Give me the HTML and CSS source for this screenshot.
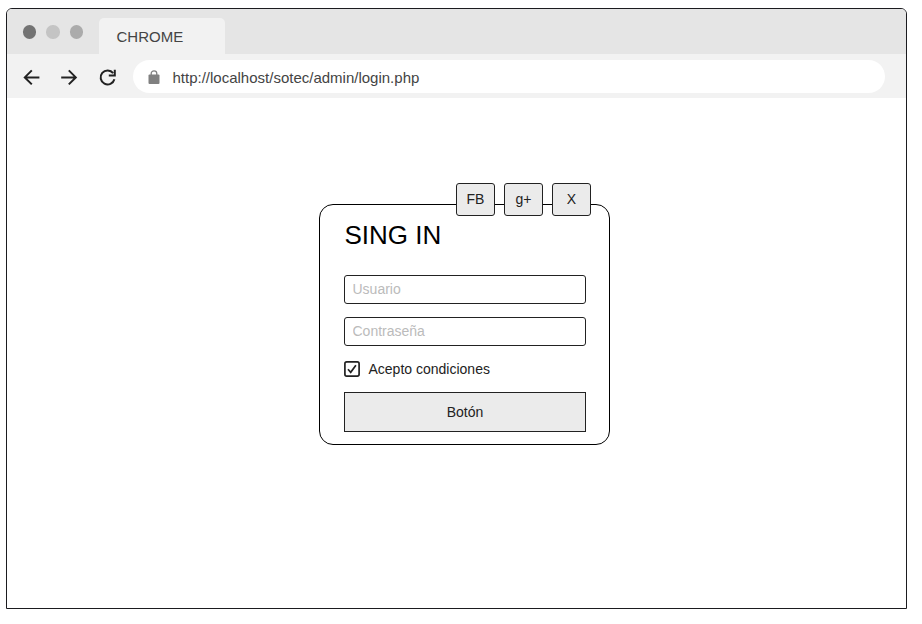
FILE: index.html
```html
<!DOCTYPE html>
<html lang="es">
<head>
<meta charset="utf-8">
<title>Login</title>
<link rel="stylesheet" href="styles.css">
</head>
<body>
<div class="window">
  <header class="tabbar">
    <div class="dots"><span class="dot dark"></span><span class="dot light"></span><span class="dot mid"></span></div>
    <div class="tab">CHROME</div>
  </header>
  <div class="toolbar">
    <svg class="nav" viewBox="0 0 18 18"><path d="M16.4 8.4H2M8.8 1.4L1.8 8.4l7 7"/></svg>
    <svg class="nav" viewBox="0 0 18 18"><path d="M1.2 8.4H15.6M8.8 1.4L15.8 8.4l-7 7"/></svg>
    <svg class="nav reload" viewBox="0 0 18 18"><path d="M15.2 4.2A7 7 0 1 0 16.4 10.2"/><path d="M16.8 0.8v5.6H10.8"/></svg>
    <div class="address">
      <svg class="lock" viewBox="0 0 12 15"><path class="shackle" d="M3.2 6V3.6a2.8 2.8 0 0 1 5.6 0V6"/><rect x="0.5" y="4.6" width="11" height="9.4" rx="1"/></svg>
      <span>http://localhost/sotec/admin/login.php</span>
    </div>
  </div>
  <main class="page">
    <form class="card">
      <div class="social">
        <button type="button">FB</button>
        <button type="button">g+</button>
        <button type="button">X</button>
      </div>
      <h1>SING IN</h1>
      <input class="field" type="text" placeholder="Usuario">
      <input class="field" type="text" placeholder="Contraseña">
      <label class="terms">
        <svg class="check" viewBox="0 0 16 16"><rect x="0.9" y="0.9" width="14.2" height="14.2" rx="1.8"/><path d="M4 8.3l2.7 3L11.9 4.2"/></svg>
        <span>Acepto condiciones</span>
      </label>
      <button class="submit" type="button">Botón</button>
    </form>
  </main>
</div>
</body>
</html>
```
FILE: styles.css
```css
* { box-sizing: border-box; }
body {
  margin: 0;
  padding: 8px 0 0 6px;
  background: #fff;
  color: #222;
  font-family: "Liberation Sans", Arial, sans-serif;
  font-size: 14px;
}
.window {
  width: 901px;
  height: 601px;
  border: 1px solid #1b1b1f;
  border-radius: 6px 6px 0 0;
  overflow: hidden;
}
.tabbar {
  display: flex;
  height: 45px;
  padding: 9px 0 0 15.5px;
  background: #e5e5e5;
}
.dots {
  display: flex;
  gap: 10px;
  width: 76.5px;
  padding-top: 7px;
}
.dot { width: 13.5px; height: 13.5px; border-radius: 50%; }
.dark { background: #737373; }
.light { background: #c4c4c4; }
.mid { background: #ababab; }
.tab {
  width: 126px;
  height: 36px;
  padding-left: 17.5px;
  border-radius: 5px 5px 0 0;
  background: #f2f2f2;
  color: #444;
  font-size: 15px;
  line-height: 37px;
}
.toolbar {
  display: flex;
  align-items: center;
  height: 44px;
  padding: 0 21.5px 0 16px;
  background: #f2f2f2;
}
.nav {
  width: 18px;
  height: 18px;
  margin: 3px 19px 0 0;
  fill: none;
  stroke: #222;
  stroke-width: 2;
}
.reload { margin: 4px 16.5px 0 1px; }
.address {
  display: flex;
  align-items: center;
  flex: 1;
  height: 33px;
  margin-top: 1.5px;
  padding: 1.5px 0 0 15px;
  border-radius: 17px;
  background: #fff;
  color: #444;
  font-size: 15px;
}
.lock { width: 12px; height: 15px; margin-right: 13px; fill: #808080; }
.shackle { fill: none; stroke: #808080; stroke-width: 1.3; }
.page { padding: 106px 0 0 312px; }
.card {
  position: relative;
  display: flex;
  flex-direction: column;
  width: 291px;
  height: 241px;
  padding: 13px 23px 0 24px;
  border: 1px solid #000;
  border-radius: 14px;
}
.social {
  position: absolute;
  top: -22px;
  right: 18px;
  display: flex;
  gap: 9px;
}
button {
  padding: 0;
  border: 1px solid #222;
  background: #ebebeb;
  color: #222;
  font: inherit;
}
.social button { width: 39px; height: 33px; padding-bottom: 1px; border-radius: 3px; }
h1 {
  margin: 0 0 23px 0.5px;
  color: #000;
  font-size: 26px;
  font-weight: 400;
  line-height: 34px;
}
.field {
  height: 29px;
  margin-bottom: 13px;
  padding: 0 0 1px 7.5px;
  border: 1px solid #222;
  border-radius: 3px;
  background: #fff;
  font: inherit;
}
.field::placeholder { color: #bbb; opacity: 1; }
.terms {
  display: flex;
  align-items: center;
  gap: 9px;
  height: 16px;
  margin: 2px 0 15px -0.5px;
}
.check { width: 16px; height: 16px; fill: none; stroke: #222; stroke-width: 1.7; }
.submit { height: 40px; }
```
